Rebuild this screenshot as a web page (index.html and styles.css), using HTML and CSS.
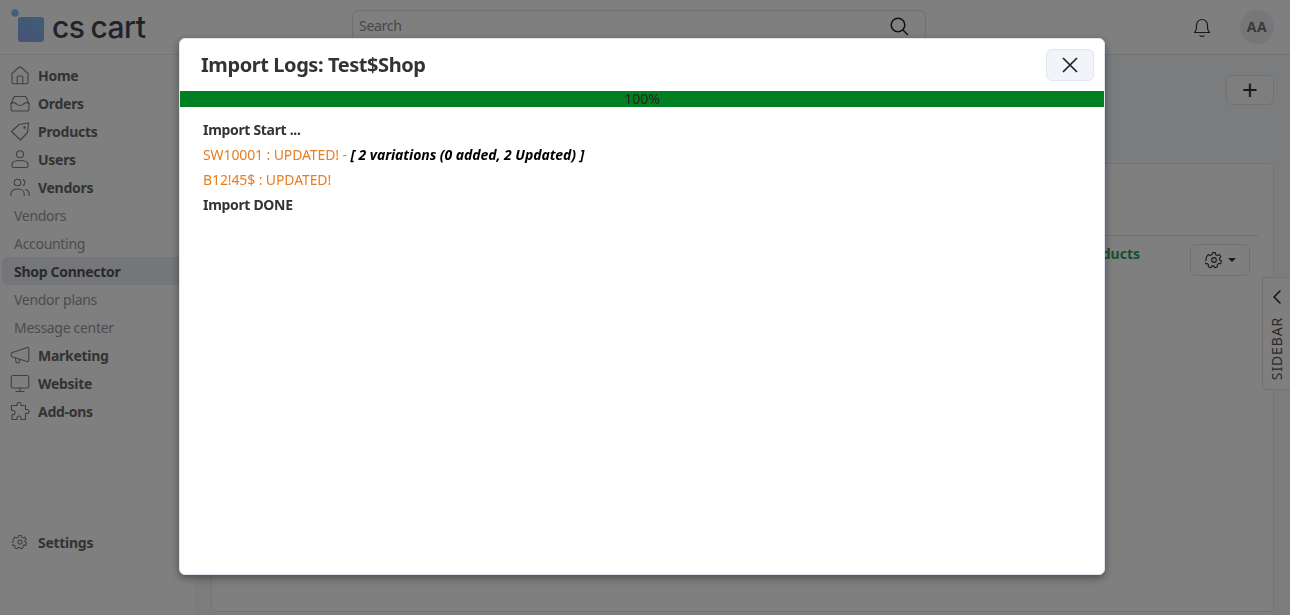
FILE: index.html
```html
<!DOCTYPE html>
<html lang="en">
<head>
<meta charset="utf-8">
<title>Import Logs</title>
<link rel="stylesheet" href="styles.css">
</head>
<body>
<div class="app">
  <header class="topbar">
    <div class="logo">
      <svg class="logo-mark" width="46" height="46" viewBox="0 0 46 46"><defs><linearGradient id="lg" x1="0" y1="1" x2="1" y2="0"><stop offset="0" stop-color="#8ca4ee"/><stop offset="1" stop-color="#80bcec"/></linearGradient></defs><circle cx="15" cy="13" r="3.7" fill="#8abcf2"/><rect x="18" y="17" width="26" height="25" rx="3" fill="url(#lg)"/></svg>
      <span class="logo-text">cs cart</span>
    </div>
    <div class="search">
      <span class="search-ph">Search</span>
      <svg width="20" height="20" viewBox="0 0 20 20" fill="none" stroke="#222" stroke-width="1.5"><circle cx="9" cy="9" r="6.8"/><path d="M14 14l4.5 4.5" stroke-linecap="round"/></svg>
    </div>
    <div class="top-actions">
      <svg width="20" height="22" viewBox="0 0 20 22" fill="none" stroke="#333" stroke-width="1.2" stroke-linejoin="round" stroke-linecap="round"><path d="M2.500 16.500c1.300-1.300 2-2.300 2-5V9a5.500 5.500 0 0 1 11 0v2.500c0 2.700.7 3.700 2 5z"/><path d="M8 19.700c1.200.8 2.800.8 4 0"/></svg>
      <span class="avatar">AA</span>
    </div>
  </header>
  <div class="body-row">
    <nav class="sidebar">
      <ul class="nav-list">
        <li class="nav-item"><svg class="nav-icon" viewBox="0 0 20 20"><path d="M2 8.500 8.700 2.500a2 2 0 0 1 2.600 0L18 8.500V17a1.800 1.800 0 0 1-1.800 1.800H3.800A1.800 1.800 0 0 1 2 17z"/><path d="M7.200 18.800V12a1 1 0 0 1 1-1h3.600a1 1 0 0 1 1 1v6.800"/></svg>Home</li>
        <li class="nav-item"><svg class="nav-icon" viewBox="0 0 20 20"><path d="M1 10.500 4.300 3.500h11.400l3.300 7v5.500a2 2 0 0 1-2 2H3a2 2 0 0 1-2-2z"/><path d="M1 10.500c2.500-1.500 4-1 5.500.5 1.500 2 5.500 2 7 0 1.500-1.500 3-2 5.500-.5"/></svg>Orders</li>
        <li class="nav-item"><svg class="nav-icon" viewBox="0 0 20 20"><path d="M1.500 10.500 9 3.500l9.500-1.500-1 9.500-7 7.500z"/><circle cx="14.500" cy="6.500" r=".7"/></svg>Products</li>
        <li class="nav-item"><svg class="nav-icon" viewBox="0 0 20 20"><circle cx="10" cy="5.200" r="3.500"/><path d="M2 17v-1.500c0-2.500 3.500-4 8-4s8 1.500 8 4V17a1.500 1.500 0 0 1-1.500 1.500h-13A1.500 1.500 0 0 1 2 17z"/></svg>Users</li>
        <li class="nav-item"><svg class="nav-icon" viewBox="0 0 20 20"><circle cx="7.500" cy="5.500" r="3.300"/><path d="M.8 18.500v-1.500c0-3 3-5 6.700-5s6.700 2 6.700 5v1.500M13 2.500a3.300 3.300 0 0 1 0 6M15.800 12.500c2 .7 3.400 2.200 3.400 4.500v1.500"/></svg>Vendors</li>
        <li class="nav-sub">Vendors</li>
        <li class="nav-sub">Accounting</li>
        <li class="nav-sub nav-sub-active">Shop Connector</li>
        <li class="nav-sub">Vendor plans</li>
        <li class="nav-sub">Message center</li>
        <li class="nav-item"><svg class="nav-icon" viewBox="0 0 20 20"><path d="M1 9.500c0-1 .5-1.500 1.500-2L17 2.500c1-.3 1.800.3 1.800 1.200v11.600c0 .9-.8 1.500-1.800 1.200L2.500 12c-1-.5-1.500-1-1.500-2.500z"/><path d="M5.500 13.200 6 16.500c.2 1 1 1.500 2 1.300l1-.3c.8-.3 1-1 .8-1.800l-.2-1"/></svg>Marketing</li>
        <li class="nav-item"><svg class="nav-icon" viewBox="0 0 20 20"><rect x="1.200" y="2.500" width="17.600" height="12.500" rx="1.800"/><path d="M10 15v3M6 18.500h8"/></svg>Website</li>
        <li class="nav-item"><svg class="nav-icon" viewBox="0 0 20 20"><path d="M7 4.500V3.500a2 2 0 0 1 4 0v1h4.500v4h1.500a2 2 0 0 1 0 4h-1.500v6H11v-1.500a2 2 0 0 0-4 0v1.500H2v-5h1a2 2 0 0 0 0-4H1.500v-5z"/></svg>Add-ons</li>
      </ul>
      <div class="nav-item nav-settings"><svg class="nav-icon nav-icon-small" viewBox="0 0 20 20"><circle cx="10" cy="10" r="2.600"/><path d="M8.500 1.800h3l.5 2.400 1.700.8 2.200-1.100 1.800 2.500-1.600 1.800.2 1.800 2 1.300-1 2.900-2.400-.3-1.300 1.300.2 2.400-2.900.9-1.300-2-1.800 0-1.300 2-2.900-.9.200-2.400-1.300-1.300-2.400.3-1-2.900 2-1.300.2-1.800L1.800 6.400l1.800-2.500 2.200 1.100 1.700-.8z"/></svg>Settings</div>
    </nav>
    <main class="main">
      <div class="main-toolbar">
        <button class="plus-btn" type="button">+</button>
      </div>
      <section class="card">
        <div class="card-head"></div>
        <div class="card-row">
          <span class="card-link">Products</span>
          <button class="gear-btn" type="button">
            <svg width="18" height="18" viewBox="0 0 20 20" fill="none" stroke="#333" stroke-width="1.200" stroke-linejoin="round"><circle cx="10" cy="10" r="2.600"/><path d="M8.500 1.800h3l.5 2.400 1.700.8 2.200-1.100 1.800 2.500-1.600 1.800.2 1.800 2 1.300-1 2.900-2.400-.3-1.300 1.300.2 2.400-2.900.9-1.300-2-1.800 0-1.300 2-2.900-.9.200-2.400-1.300-1.300-2.400.3-1-2.900 2-1.300.2-1.800L1.800 6.400l1.800-2.500 2.200 1.100 1.700-.8z"/></svg>
            <span class="caret"></span>
          </button>
        </div>
      </section>
    </main>
  </div>
  <div class="sidebar-tab">
    <svg width="10" height="16" viewBox="0 0 10 16" fill="none" stroke="#222" stroke-width="1.500"><path d="M8 2 2 8l6 6" stroke-linecap="round" stroke-linejoin="round"/></svg>
    <span class="sidebar-tab-label">SIDEBAR</span>
  </div>
</div>
<div class="overlay">
  <div class="modal">
    <div class="modal-head">
      <h2 class="modal-title">Import Logs: Test$Shop</h2>
      <button class="modal-close" type="button" aria-label="Close">
        <svg width="16" height="16" viewBox="0 0 16 16" stroke="#222" stroke-width="1.700" fill="none"><path d="M1 1l14 14M15 1 1 15"/></svg>
      </button>
    </div>
    <div class="progress">100%</div>
    <div class="log">
      <div class="log-line log-strong">Import Start ...</div>
      <div class="log-line log-update">SW10001 : UPDATED! - <em class="log-note">[ 2 variations (0 added, 2 Updated) ]</em></div>
      <div class="log-line log-update">B12!45$ : UPDATED!</div>
      <div class="log-line log-strong">Import DONE</div>
    </div>
  </div>
</div>
</body>
</html>
```
FILE: styles.css
```css
* { box-sizing: border-box; }
html, body { margin: 0; height: 100%; overflow: hidden; }
body { font-family: "Noto Sans", "Open Sans", sans-serif; font-size: 14px; color: #333; background: #fff; }
.app { height: 615px; display: flex; flex-direction: column; position: relative; }
.topbar { height: 55px; flex: none; display: flex; align-items: center; padding-bottom: 1px; background: #fff; border-bottom: 1px solid #e6e8ec; }
.logo { width: 352px; flex: none; display: flex; align-items: flex-start; height: 100%; position: relative; }
.logo-mark { position: absolute; left: 0; top: 0; }
.logo-text { margin-left: 52px; margin-top: 6px; font-family: "Inter", sans-serif; font-size: 30px; font-weight: 500; letter-spacing: -.5px; word-spacing: -1.500px; line-height: 42px; color: #3f4656; }
.search { width: 574px; height: 32px; margin-top: -2px; flex: none; display: flex; align-items: center; justify-content: space-between; padding: 0 16px 0 6px; border: 1px solid #dfe3e8; border-radius: 6px; }
.search-ph { color: #8a8f96; font-size: 14px; letter-spacing: -.3px; }
.top-actions { margin-left: auto; display: flex; align-items: center; gap: 28px; padding-right: 16px; }
.avatar { width: 34px; height: 34px; border-radius: 50%; background: #eceef1; display: flex; align-items: center; justify-content: center; font-weight: 700; font-size: 14px; letter-spacing: .5px; color: #777; }
.body-row { flex: 1; min-height: 0; display: flex; }
.sidebar { width: 195px; flex: none; background: #fff; padding-top: 6px; display: flex; flex-direction: column; position: relative; }
.nav-list { list-style: none; margin: 0; padding: 0; }
.nav-item { height: 28px; display: flex; align-items: center; gap: 8px; padding-left: 10px; font-weight: 700; font-size: 14px; letter-spacing: -.28px; color: #666; }
.nav-icon { width: 20px; height: 20px; flex: none; fill: none; stroke: #808080; stroke-width: 1.100; stroke-linejoin: round; stroke-linecap: round; }
.nav-icon-small { width: 16px; height: 16px; margin: 0 2px; stroke-width: 1.300; }
.nav-sub { height: 28px; display: flex; align-items: center; padding-left: 14px; font-size: 14px; letter-spacing: -.3px; color: #999; }
.nav-sub-active { margin-left: 2px; padding-left: 12px; font-weight: 700; color: #555; background: #e9ecf2; border-radius: 6px 0 0 6px; }
.nav-settings { margin-top: 103px; }
.main { flex: 1; min-width: 0; background: #f6f8fb; padding: 20px 16px 3px 16px; display: flex; flex-direction: column; }
.main-toolbar { height: 88px; flex: none; display: flex; justify-content: flex-end; }
.plus-btn { width: 48px; height: 30px; border: 1px solid #dfe3e8; border-radius: 6px; background: #fdfdfe; font-size: 27px; line-height: 26px; color: #333; padding: 0; font-family: "Liberation Sans", sans-serif; }
.card { flex: 1; background: #fff; border: 1px solid #e2e6ec; border-radius: 6px; padding: 0 15px; }
.card-head { height: 72px; border-bottom: 1px solid #dfe3e8; }
.card-row { display: flex; align-items: flex-start; justify-content: flex-end; padding: 8px 8px 0 0; }
.card-link { color: #2ba05a; font-weight: 700; font-size: 14px; margin-right: 50px; line-height: 20px; }
.gear-btn { width: 60px; height: 32px; display: flex; align-items: center; justify-content: center; gap: 5px; background: #fff; border: 1px solid #dfe3e8; border-radius: 6px; padding: 0; }
.caret { width: 0; height: 0; border-left: 4px solid transparent; border-right: 4px solid transparent; border-top: 4px solid #333; }
.sidebar-tab { position: absolute; right: 0; top: 277px; width: 28px; height: 113px; background: #fff; border: 1px solid #e2e6ec; border-right: 0; border-radius: 4px 0 0 4px; display: flex; flex-direction: column; align-items: center; padding-top: 11px; gap: 12px; }
.sidebar-tab-label { writing-mode: vertical-rl; transform: rotate(180deg); font-size: 14px; letter-spacing: .85px; color: #555; line-height: 16px; }
.overlay { position: fixed; inset: 0; background: rgba(0,0,0,.5); display: flex; align-items: flex-start; justify-content: flex-start; padding: 38px 0 0 179px; }
.modal { width: 926px; height: 537px; background: #fff; border: 1px solid #dfe6f0; border-radius: 6px; box-shadow: 0 3px 9px rgba(0,0,0,.4); }
.modal-head { height: 52px; display: flex; align-items: center; justify-content: space-between; padding: 0 10px 0 21px; }
.modal-title { margin: 0 0 2px; font-size: 20px; font-weight: 700; letter-spacing: -.42px; color: #333; }
.modal-close { width: 48px; height: 32px; background: #f1f5f9; border: 1px solid #e2e8f0; border-radius: 6px; display: flex; align-items: center; justify-content: center; padding: 0; }
.progress { height: 16px; background: #008020; text-align: center; font-size: 14px; line-height: 15px; color: #222; }
.log { padding: 10px 23px; }
.log-line { line-height: 25px; font-size: 14px; }
.log-strong { font-weight: 700; color: #333; letter-spacing: -.32px; }
.log-update { color: #e67e22; letter-spacing: -.11px; }
.log-note { color: #000; font-weight: 700; letter-spacing: -.06px; }
```
